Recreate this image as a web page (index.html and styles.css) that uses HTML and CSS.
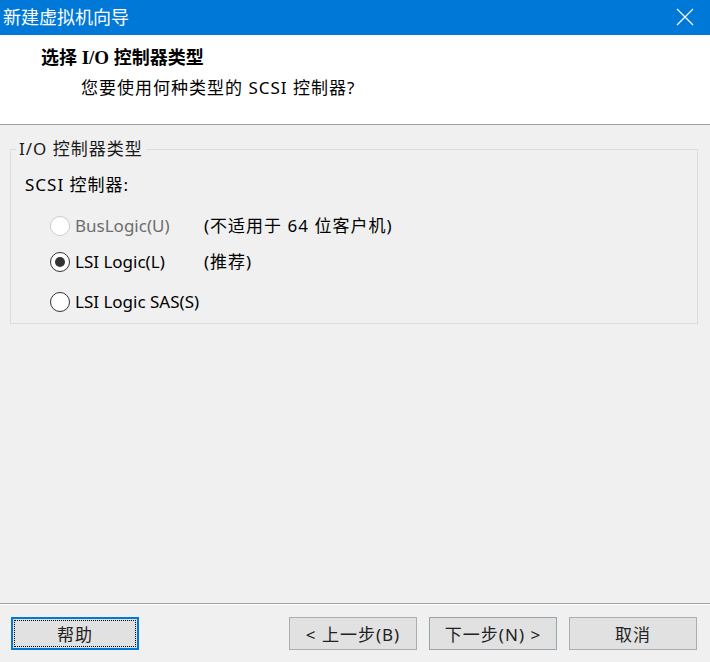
FILE: index.html
```html
<!DOCTYPE html>
<html lang="zh-CN">

<head>
  <meta charset="UTF-8" />
  <meta name="viewport" content="width=device-width, initial-scale=1.0" />
  <title>新建虚拟机向导</title>
  <link rel="stylesheet" href="styles.css">
</head>

<body>
  <div class="window">
    <div class="titlebar">
      <span class="title">新建虚拟机向导</span>
      <a class="close" href="javascript:;">
        <svg width="18" height="18" viewBox="0 0 18 18">
          <path d="M1 1 L17 17 M17 1 L1 17" stroke="#fff" stroke-width="1.2" fill="none" />
        </svg>
      </a>
    </div>

    <div class="header">
      <h3>选择 <span class="serif">I/O</span> 控制器类型</h3>
      <p>您要使用何种类型的 SCSI 控制器?</p>
    </div>

    <div class="main">
      <fieldset class="group">
        <legend>I/O 控制器类型</legend>
        <div class="group-label">SCSI 控制器:</div>
        <ul class="options">
          <li class="disabled">
            <input type="radio" name="ctrl" disabled />
            <span class="label">BusLogic(U)</span>
            <span class="note">(不适用于 64 位客户机)</span>
          </li>
          <li>
            <input type="radio" name="ctrl" checked />
            <span class="label">LSI Logic(L)</span>
            <span class="note">(推荐)</span>
          </li>
          <li>
            <input type="radio" name="ctrl" />
            <span class="label">LSI Logic SAS(S)</span>
          </li>
        </ul>
      </fieldset>
    </div>

    <div class="footer">
      <button class="btn focus"><span>帮助</span></button>
      <div class="btn-group">
        <button class="btn">&lt; 上一步(B)</button>
        <button class="btn hover">下一步(N) &gt;</button>
        <button class="btn">取消</button>
      </div>
    </div>
  </div>
</body>

</html>
```

FILE: styles.css
```css
* {
  margin: 0;
  padding: 0;
  box-sizing: border-box;
}

body {
  font-family: "Noto Sans", "Noto Sans CJK SC", sans-serif;
  font-size: 17px;
  color: #000;
  background: #f0f0f0;
}

.window {
  width: 710px;
  height: 662px;
  display: flex;
  flex-direction: column;
}

.titlebar {
  height: 35px;
  background: #0078d7;
  display: flex;
  align-items: center;
  justify-content: space-between;
  padding: 0 16px 0 3px;
}

.titlebar .title {
  color: #fff;
  font-size: 18px;
  line-height: 22px;
  margin-top: -1px;
}

.titlebar .close {
  display: flex;
  margin-top: -2px;
}

.header {
  height: 90px;
  background: #fff;
  border-bottom: 1px solid #a0a0a0;
  padding: 11px 0 0 41px;
}

.header h3 {
  font-size: 18px;
  line-height: 22px;
  font-weight: bold;
}

.header h3 .serif {
  font-family: "Liberation Serif", serif;
  font-size: 19px;
}

.header p {
  margin: 8px 0 0 40px;
  line-height: 22px;
  letter-spacing: 1px;
}

.main {
  flex: 1;
  padding: 13px 12px 0 10px;
}

.group {
  border: 1px solid #dcdcdc;
  padding: 14px 0 10px 14px;
}

.group legend {
  margin-left: -9px;
  padding: 0 3px;
  line-height: 22px;
  color: #1a1a1a;
  letter-spacing: 1px;
}

.group-label {
  line-height: 22px;
  letter-spacing: 1px;
}

.options {
  list-style: none;
  margin: 19px 0 0 25px;
}

.options li {
  display: grid;
  grid-template-columns: 25px 129px auto;
  align-items: center;
  line-height: 22px;
}

.options li + li {
  margin-top: 14px;
}

.options li:last-child {
  margin-top: 18px;
}

.options .note {
  letter-spacing: 1px;
}

.options input {
  appearance: none;
  width: 20px;
  height: 20px;
  border: 1px solid #333;
  border-radius: 50%;
  background: #fff;
  display: grid;
  place-items: center;
}

.options input:checked::before {
  content: "";
  width: 10px;
  height: 10px;
  border-radius: 50%;
  background: #333;
}

.options li.disabled input {
  border-color: #cccccc;
}

.options li.disabled .label {
  color: #6d6d6d;
}

.footer {
  height: 59px;
  border-top: 1px solid #a0a0a0;
  box-shadow: inset 0 1px 0 #fff;
  display: flex;
  justify-content: space-between;
  padding: 13px 13px 0 11px;
}

.btn-group {
  display: flex;
  gap: 12px;
}

.btn {
  width: 128px;
  height: 33px;
  background: #e1e1e1;
  border: 1px solid #adadad;
  font-family: "Noto Sans", "Noto Sans CJK SC", sans-serif;
  font-size: 17px;
  color: #222;
  letter-spacing: 1px;
}

.btn.hover {
  border-color: #98a4ae;
}

.btn.focus {
  border: 2px solid #0078d7;
  padding: 1px;
}

.btn.focus span {
  display: flex;
  align-items: center;
  justify-content: center;
  height: 100%;
  border: 1px dotted #000;
}
```
